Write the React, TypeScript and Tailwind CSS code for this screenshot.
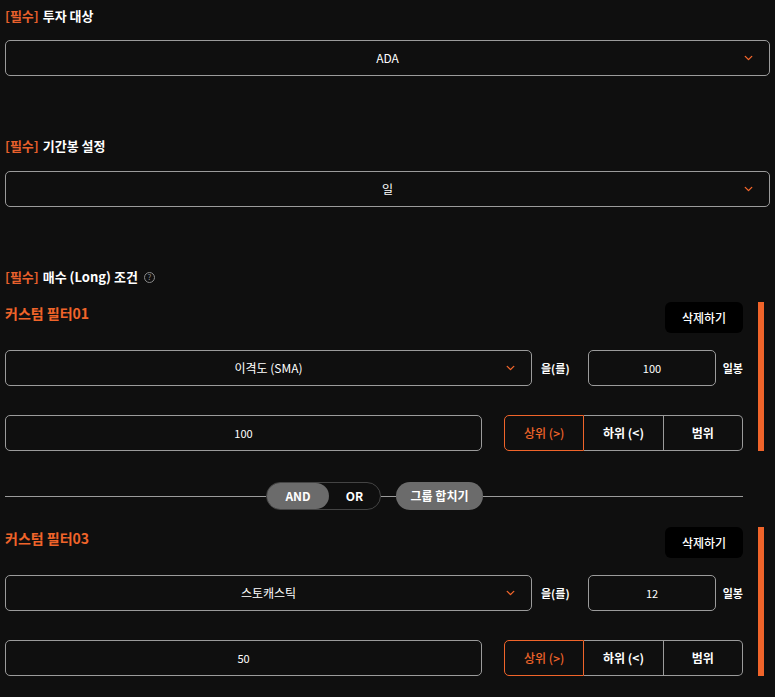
import { ChevronDown } from "lucide-react";

const ORANGE = "text-[#f0642a]";

function SectionTitle({ label, help }: { label: string; help?: boolean }) {
  return (
    <div className="flex items-center gap-1 h-5 text-[13px] font-bold leading-5">
      <span className="text-[#e8602c]">[필수]</span>
      <span className="text-white">{label}</span>
      {help && (
        <span className="ml-0.5 flex h-[11px] w-[11px] items-center justify-center rounded-full border border-[#8a8a8a] text-[8px] font-normal leading-none text-[#8a8a8a]">
          ?
        </span>
      )}
    </div>
  );
}

function SelectBox({ value, className = "" }: { value: string; className?: string }) {
  return (
    <div
      className={`relative flex h-9 items-center justify-center rounded-[5px] border border-[#9b9b9b] text-xs text-white ${className}`}
    >
      <span>{value}</span>
      <ChevronDown
        size={13}
        strokeWidth={2.5}
        className="absolute right-[14px] top-1/2 -translate-y-1/2 text-[#f0642a]"
      />
    </div>
  );
}

function ValueBox({ value, className = "" }: { value: string; className?: string }) {
  return (
    <div
      className={`flex h-9 items-center justify-center rounded-[5px] border border-[#9b9b9b] text-[11px] text-white ${className}`}
    >
      {value}
    </div>
  );
}

function FilterCard({ title, indicator, period, threshold }: {
  title: string;
  indicator: string;
  period: string;
  threshold: string;
}) {
  return (
    <div className="flex gap-[15px] pr-[6px]">
      <div className="flex-1">
        <div className="flex items-start justify-between">
          <div className={`pt-[1px] text-[14px] font-bold leading-5 ${ORANGE}`}>{title}</div>
          <button className="h-[31px] w-[78px] rounded-md bg-black text-xs font-medium text-white">
            삭제하기
          </button>
        </div>
        <div className="mt-[17px] flex items-center">
          <SelectBox value={indicator} className="w-[527px]" />
          <span className="ml-[9px] w-[47px] text-[11px] font-bold text-white">을(를)</span>
          <ValueBox value={period} className="w-[128px]" />
          <span className="ml-auto text-[11px] font-bold text-white">일봉</span>
        </div>
        <div className="mt-[29px] flex items-center">
          <ValueBox value={threshold} className="w-[477px]" />
          <div className="ml-auto flex h-9 w-[239px] text-xs font-bold">
            <button className="flex-1 rounded-l-[5px] border border-[#f0642a] font-medium text-[#f0642a]">
              상위 (&gt;)
            </button>
            <button className="flex-1 border-y border-r border-[#9b9b9b] text-white">
              하위 (&lt;)
            </button>
            <button className="flex-1 rounded-r-[5px] border-y border-r border-[#9b9b9b] text-white">
              범위
            </button>
          </div>
        </div>
      </div>
      <div className="w-[6px] bg-[#f0642a]" />
    </div>
  );
}

export default function App() {
  return (
    <div
      className="min-h-screen bg-[#0f0f0f] px-[5px] pt-[6px]"
      style={{ fontFamily: '"Noto Sans CJK KR", "Noto Sans", sans-serif' }}
    >
      <SectionTitle label="투자 대상" />
      <SelectBox value="ADA" className="mt-[14px]" />

      <div className="mt-[60px]">
        <SectionTitle label="기간봉 설정" />
      </div>
      <SelectBox value="일" className="mt-[15px]" />

      <div className="mt-[60px]">
        <SectionTitle label="매수 (Long) 조건" help />
      </div>

      <div className="mt-[15px]">
        <FilterCard title="커스텀 필터01" indicator="이격도 (SMA)" period="100" threshold="100" />
      </div>

      <div className="mb-[17px] mt-[31px] flex items-center pr-[27px]">
        <div className="h-px flex-1 bg-[#9b9b9b]" />
        <div className="flex h-[28px] w-[115px] rounded-full border border-[#444] text-xs font-bold">
          <span className="flex w-[62px] items-center justify-center rounded-full bg-[#6b6b6b] text-white">
            AND
          </span>
          <span className="flex flex-1 items-center justify-center text-white">OR</span>
        </div>
        <div className="h-px w-[15px] bg-[#9b9b9b]" />
        <div className="flex h-[28px] w-[87px] items-center justify-center rounded-full bg-[#6b6b6b] text-xs font-bold text-white">
          그룹 합치기
        </div>
        <div className="h-px w-[260px] bg-[#9b9b9b]" />
      </div>

      <FilterCard title="커스텀 필터03" indicator="스토캐스틱" period="12" threshold="50" />
    </div>
  );
}
